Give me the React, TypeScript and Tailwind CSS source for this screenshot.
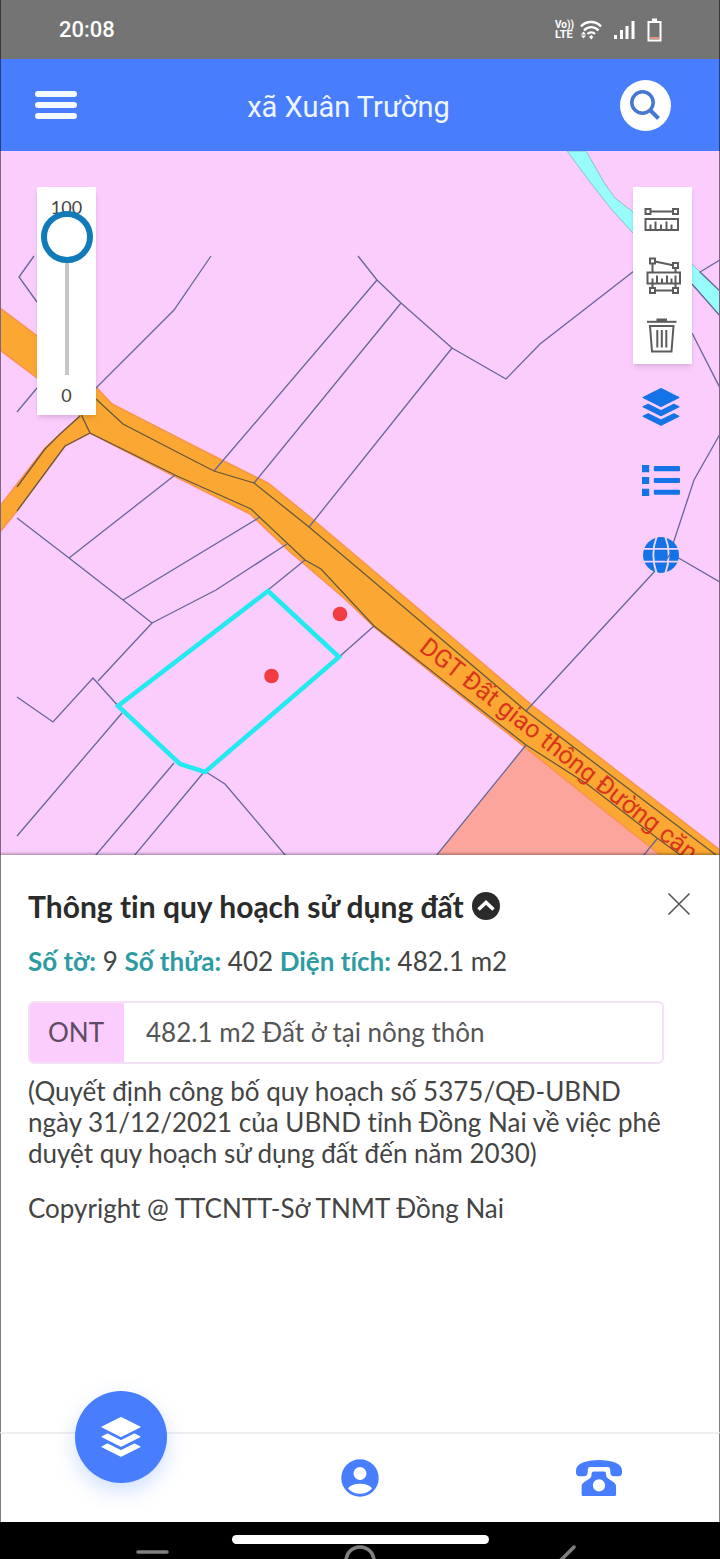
import { useState } from "react"

const PARCEL_LINES = [
  "34,256 19,277 37,302",
  "17,412 37,388",
  "211,256 174,310 96,388",
  "358,256 377,280 401,303 452,348 506,379 540,344 634,271",
  "377,280 214,471",
  "401,303 254,483",
  "452,348 309,527",
  "175,475 69,558",
  "17,518 69,558 123,600 152,623 98,681",
  "260,517 123,600",
  "287,544 216,590 152,623",
  "305,560 268,590",
  "17,697 53,722 93,678 120,708",
  "122,713 17,836",
  "174,763 95,856",
  "204,772 134,856",
  "206,772 225,784 286,856",
  "374,626 339,657",
  "526,711 655,571 670,553 694,480 720,434",
  "670,553 720,582",
  "720,260 700,272 720,291",
  "692,284 720,316",
  "692,333 720,388",
  "526,745 436,856",
  "657,839 643,856",
]

const ROAD_LINES = [
  "96,399 123,424 175,451 214,471 254,483 309,527 360,570 526,711 716,855",
  "80,412 90,433 177,476 251,509 305,560 321,569 374,626 526,745 587,784 657,838 690,862",
  "80,416 60,434 45,449 17,487",
  "90,433 65,446 17,511",
]

function Layers({ className }: { className: string }) {
  return (
    <svg viewBox="0 0 37 37" fill="currentColor" stroke="currentColor" strokeWidth="1" strokeLinejoin="round" className={className} aria-hidden="true">
      <path d="M18.500 .5 36 9.300 18.500 18 1 9.300z" />
      <path d="M1 18.300 6 15.800 18.500 22 31 15.800 36 18.300 18.500 27z" />
      <path d="M1 27.500 6 25 18.500 31.200 31 25 36 27.500 18.500 36.300z" />
    </svg>
  )
}

function RulerIcon() {
  return (
    <svg viewBox="0 0 40 40" className="size-10" fill="none" stroke="currentColor" strokeWidth="2" aria-hidden="true">
      <rect x="2.500" y="12" width="5" height="5" />
      <rect x="30" y="12" width="5" height="5" />
      <path d="M8 14.500h22M2.500 22h32.500v11H2.500zM7.500 32.500v-5M12.500 32.500v-8M18 32.500v-5M23.500 32.500v-8M28.500 32.500v-5" />
    </svg>
  )
}

function AreaIcon() {
  return (
    <svg viewBox="0 0 40 40" className="size-10" fill="none" stroke="currentColor" strokeWidth="2" aria-hidden="true">
      <rect x="7" y="2.500" width="5" height="5" />
      <rect x="30" y="7" width="5" height="5" />
      <rect x="7" y="32" width="5" height="5" />
      <rect x="30" y="32" width="5" height="5" />
      <path d="M12 5.500 30 9.300M9.500 7.500V16M32.500 12v4M9.500 28v4M32.500 28v4M12 34.500h18M4.500 16.500h32.500v11H4.500zM9.500 27.500v-5M14 27.500v-8M19 27.500v-5M24 27.500v-8M28.500 27.500v-5M32.500 27.500v-8" />
    </svg>
  )
}

function TrashIcon() {
  return (
    <svg viewBox="0 0 40 40" className="size-10" fill="none" stroke="currentColor" strokeWidth="2" aria-hidden="true">
      <path d="M4 6.800h29.500" />
      <path d="M13.500 5H24" strokeWidth="3" />
      <path d="M7 11h23.500l-2 25.500H9zM14.300 15v17.500M18.800 15v17.500M23.300 15v17.500" />
    </svg>
  )
}

function ParcelMap() {
  return (
    <svg viewBox="1 151 718 704" className="block w-full" role="img" aria-label="Bản đồ quy hoạch">
      <rect x="0" y="150" width="720" height="706" fill="#facdfc" />
      <polygon
        points="567,151 590,182 612,210 633,233 692,284 720,316 720,291 700,272 692,264 633,212 615,198 605,184 586,151"
        fill="#98fcfa"
        stroke="#8fbfcb"
        strokeWidth="1"
      />
      <polygon points="526,745 436,856 664,856" fill="#fba59c" />
      <polygon
        points="0,308 40,338 97,388 112,404 200,449 268,483 310,517 394,588 533,706 620,773 720,850 720,858 664,858 587,797 526,748 374,627 345,599 290,552 250,514 172,475 90,433 65,446 17,511 0,532 0,506 17,484 45,448 80,416 37,378 0,350"
        fill="#fba733"
        stroke="#fb9350"
        strokeWidth="1.500"
      />
      <g fill="none" stroke="#66669c" strokeWidth="1.300">
        {PARCEL_LINES.map((points) => (
          <polyline key={points} points={points} />
        ))}
      </g>
      <g fill="none" stroke="#67583f" strokeWidth="1.300">
        {ROAD_LINES.map((points) => (
          <polyline key={points} points={points} />
        ))}
      </g>
      <polygon points="268,591 339,657 205,772 180,764 118,706" fill="none" stroke="#22eaf0" strokeWidth="4.500" />
      <circle cx="340" cy="614" r="7.300" fill="#f23c42" />
      <circle cx="271.500" cy="676" r="7.300" fill="#f23c42" />
      <text transform="translate(418 650) rotate(38)" fill="#d8351c" className="font-['Roboto',sans-serif] text-[25px]">
        DGT Đất giao thông Đường căn
      </text>
    </svg>
  )
}

function StatusBar() {
  return (
    <div className="flex h-[59px] items-center justify-between border-x border-black/50 bg-[#747474] pr-[57px] pl-[58px] text-white">
      <span className="text-[22px] font-medium">20:08</span>
      <div className="flex items-center">
        <div className="flex flex-col text-[10px] leading-[10px] font-bold">
          <span>Vo))</span>
          <span className="text-[11px]">LTE</span>
        </div>
        <svg viewBox="0 0 22 20" className="ml-1.5 h-5 w-[22px]" fill="none" stroke="currentColor" strokeWidth="2.300" aria-hidden="true">
          <path d="M1 6.500C6 .5 16 .5 21 6.500M4 10.500c4-4.500 10.500-4.500 14.500 0M7.500 14c2-2.300 5.500-2.300 7.500 0" />
          <path d="M11.200 15l2.200 2-2.200 2.500L9 17zM3.500 11.500l2.500 3H1zM3.500 18.500l2.500-3H1z" fill="currentColor" stroke="none" />
        </svg>
        <svg viewBox="0 0 21 20" className="ml-3 h-5 w-[21px]" fill="currentColor" aria-hidden="true">
          <path d="M0 15h3v4H0zM6 10h3v9H6zM11.500 6h3v13h-3zM17.500 1h3v18h-3z" />
        </svg>
        <svg viewBox="0 0 15 24" className="ml-3 h-6 w-[15px]" fill="none" stroke="currentColor" strokeWidth="2" aria-hidden="true">
          <path d="M1.500 4h12v18.500h-12z" />
          <path d="M5 2h5" strokeWidth="3" />
          <path d="M3 20h9" stroke="#e8907f" />
        </svg>
      </div>
    </div>
  )
}

function Header() {
  return (
    <header className="flex h-[92px] items-center justify-between border-x border-black/50 bg-[#487efe] pr-12 pl-[34px]">
      <button type="button" aria-label="Menu" className="flex w-[42px] flex-col gap-[5px]">
        <span className="h-1.5 w-full rounded-full bg-[#f2faff]" />
        <span className="h-1.5 w-full rounded-full bg-[#f2faff]" />
        <span className="h-1.5 w-full rounded-full bg-[#f2faff]" />
      </button>
      <h1 className="pt-1 text-[29px] leading-8 text-[#eef6ff]">xã Xuân Trường</h1>
      <button type="button" aria-label="Tìm kiếm" className="flex size-[51px] items-center justify-center rounded-full bg-white text-[#4677d2]">
        <svg viewBox="0 0 30 30" className="size-[30px]" fill="none" stroke="currentColor" strokeWidth="3.500" aria-hidden="true">
          <circle cx="12.500" cy="12.500" r="10.700" />
          <path d="m20 20 8.500 8.500" strokeWidth="4" />
        </svg>
      </button>
    </header>
  )
}

function MapView() {
  const [opacity, setOpacity] = useState(100)

  return (
    <section className="relative border-x border-black/50 bg-[#facdfc]">
      <ParcelMap />

      <div className="absolute top-9 left-9 flex w-[59px] flex-col items-center bg-white py-2 font-['Lato',sans-serif] text-lg leading-6 text-[#444] shadow-md">
        <label htmlFor="opacity">100</label>
        <input
          id="opacity"
          type="range"
          min={0}
          max={100}
          value={opacity}
          onChange={(e) => setOpacity(Number(e.target.value))}
          className="relative -mt-2 h-[164px] w-[52px] appearance-none bg-[linear-gradient(#c6c6c6,#c6c6c6)] bg-[length:4px_100%] bg-center bg-no-repeat [direction:rtl] [writing-mode:vertical-lr] [&::-webkit-slider-thumb]:size-[52px] [&::-webkit-slider-thumb]:appearance-none [&::-webkit-slider-thumb]:rounded-full [&::-webkit-slider-thumb]:border-[6px] [&::-webkit-slider-thumb]:border-[#117ab8] [&::-webkit-slider-thumb]:bg-white"
        />
        <span className="mt-2">0</span>
      </div>

      <div className="absolute top-9 right-[27px] flex flex-col items-center">
        <div className="flex flex-col bg-white text-[#5c5c5c] shadow-md">
          <button type="button" aria-label="Đo khoảng cách" className="flex size-[59px] items-center justify-center">
            <RulerIcon />
          </button>
          <button type="button" aria-label="Đo diện tích" className="flex size-[59px] items-center justify-center">
            <AreaIcon />
          </button>
          <button type="button" aria-label="Xóa" className="flex size-[59px] items-center justify-center">
            <TrashIcon />
          </button>
        </div>
        <div className="mt-6 flex flex-col gap-9 pr-1 text-[#1473e6]">
          <button type="button" aria-label="Lớp bản đồ">
            <Layers className="size-[38px]" />
          </button>
          <button type="button" aria-label="Chú giải">
            <svg viewBox="0 0 37 37" className="size-[38px]" fill="currentColor" aria-hidden="true">
              <path d="M0 3h7v7H0zM0 14.500h7v7H0zM0 26h7v7H0z" />
              <rect x="11.500" y="4" width="25.500" height="5" rx="1" />
              <rect x="11.500" y="15.500" width="25.500" height="5" rx="1" />
              <rect x="11.500" y="27" width="25.500" height="5" rx="1" />
            </svg>
          </button>
          <button type="button" aria-label="Bản đồ nền">
            <svg viewBox="0 0 37 37" className="size-[38px]" fill="none" stroke="#f3d6ff" strokeWidth="1.800" aria-hidden="true">
              <circle cx="18.500" cy="18.500" r="17.500" fill="currentColor" stroke="none" />
              <path d="M1 12.500h35M1 25h35" />
              <path d="M14.500 0C10 12 10 25 14.500 37M22.500 0c4.500 12 4.500 25 0 37" />
              <path d="M22.500 24.500 28 17" stroke="#5a6bb8" strokeWidth="1.300" />
            </svg>
          </button>
        </div>
      </div>
    </section>
  )
}

function InfoPanel() {
  return (
    <section className="relative flex-1 border-x border-black/50 bg-white pt-[31px] pr-7 pb-24 pl-[27px] font-['Lato',sans-serif] text-[26px] leading-[31px] text-[#444] shadow-[0_-1px_3px_rgba(0,0,0,0.4)] [font-variant-ligatures:none]">
      <div className="flex items-start justify-between">
        <h2 className="flex items-center gap-2 text-[30px] leading-10 font-bold text-[#2b2b2b]">
          Thông tin quy hoạch sử dụng đất
          <button type="button" aria-label="Thu gọn">
            <svg viewBox="0 0 28 28" className="size-7" aria-hidden="true">
              <circle cx="14" cy="14" r="14" fill="#2b2b2b" />
              <path d="m6.500 17.500 7.500-7 7.500 7" fill="none" stroke="#fff" strokeWidth="3.500" />
            </svg>
          </button>
        </h2>
        <button type="button" aria-label="Đóng" className="mt-1.5 text-[#555]">
          <svg viewBox="0 0 24 24" className="size-6" fill="none" stroke="currentColor" strokeWidth="1.600" aria-hidden="true">
            <path d="m1.500 1.500 21 21M22.500 1.500l-21 21" />
          </svg>
        </button>
      </div>

      <p className="mt-5">
        <b className="text-[#2d9ba2]">Số tờ:</b> 9 <b className="text-[#2d9ba2]">Số thửa:</b> 402{" "}
        <b className="text-[#2d9ba2]">Diện tích:</b> 482.1 m2
      </p>

      <div className="mt-6 mr-[27px] flex overflow-hidden rounded-md border-2 border-[#f3e2f6] text-[#555]">
        <span className="-m-0.5 bg-[#facdfc] px-5 py-4 text-[#5d4a63]">ONT</span>
        <span className="px-6 py-3.5">482.1 m2 Đất ở tại nông thôn</span>
      </div>

      <p className="mt-3 mr-[27px]">
        (Quyết định công bố quy hoạch số 5375/QĐ-UBND ngày 31/12/2021 của UBND tỉnh Đồng Nai về việc phê duyệt quy hoạch sử dụng đất đến năm 2030)
      </p>
      <p className="mt-6">Copyright @ TTCNTT-Sở TNMT Đồng Nai</p>
    </section>
  )
}

function BottomNav() {
  return (
    <nav className="relative grid h-[90px] grid-cols-3 items-center justify-items-center border-x border-t-2 border-x-black/50 border-t-[#efeff1] bg-white text-[#487efe]">
      <button type="button" aria-label="Quy hoạch" className="mt-[-82px] flex size-[92px] items-center justify-center rounded-full bg-[#487efe] text-white shadow-[0_8px_20px_rgba(72,126,254,0.25)]">
        <Layers className="size-10" />
      </button>
      <button type="button" aria-label="Tài khoản">
        <svg viewBox="0 0 38 38" className="size-[38px]" aria-hidden="true">
          <circle cx="19" cy="19" r="18.700" fill="currentColor" />
          <circle cx="19" cy="14.500" r="6.500" fill="#fff" />
          <path d="M7 29.500c3-6.500 21-6.500 24 0-6 7-18 7-24 0z" fill="#fff" />
        </svg>
      </button>
      <button type="button" aria-label="Liên hệ">
        <svg viewBox="0 0 139 111" className="w-[46px]" fill="currentColor" aria-hidden="true">
          <path d="M0 32C0 10 32 0 69.500 0S139 10 139 32v6q0 11-11 11h-12q-11 0-12-9l-1-12q0-7-7-7H43q-7 0-7 7l-1 12q-1 9-12 9H11Q0 49 0 38z" />
          <path fillRule="evenodd" d="M54 35h31q5 0 6 6v6q1 6 6 9l18 12q5 4 6 10v25q0 8-8 8H25q-8 0-8-8V78q1-6 6-10l18-12q5-3 6-9v-6q1-6 7-6zM69.500 58a18.500 18.500 0 1 0 0 37 18.500 18.500 0 1 0 0-37z" />
        </svg>
      </button>
    </nav>
  )
}

function SystemBar() {
  return (
    <div className="flex h-[37px] flex-col items-center overflow-hidden bg-black">
      <div className="mt-[13px] h-[9px] w-[257px] shrink-0 rounded-full bg-white" />
      <svg viewBox="0 0 720 15" className="h-[15px] w-full shrink-0" fill="none" stroke="#808080" strokeWidth="3.500" strokeLinecap="round" aria-hidden="true">
        <path d="M138 8h29M560 17l14-14" />
        <circle cx="360" cy="17" r="14" />
      </svg>
    </div>
  )
}

export default function App() {
  return (
    <main className="flex min-h-screen flex-col font-['Roboto',sans-serif]">
      <StatusBar />
      <Header />
      <MapView />
      <InfoPanel />
      <BottomNav />
      <SystemBar />
    </main>
  )
}
